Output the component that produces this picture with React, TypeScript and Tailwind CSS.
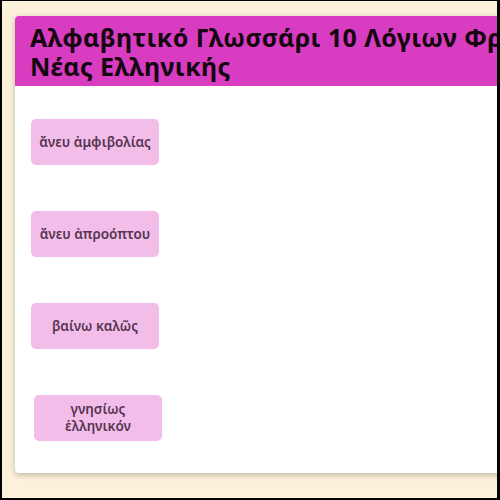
import React from "react";

const items = ["ἄνευ ἀμφιβολίας", "ἄνευ ἀπροόπτου", "βαίνω καλῶς", "γνησίως ἑλληνικόν"];

export default function App() {
  return (
    <div className="w-[500px] h-[500px] overflow-hidden bg-[#fcf2db] border-black border-t border-l-2 border-r-[3px] border-b-2 box-border" style={{ fontFamily: '"Noto Sans", sans-serif' }}>
      <div className="ml-[13px] mt-[15px] w-[520px] h-[457px] bg-white rounded-[4px] shadow-[0_2px_6px_rgba(0,0,0,0.25)] overflow-hidden">
        <div className="bg-[#d83cc0] pl-[15px] pt-[7px] h-[70px]">
          <h1 className="text-[25px] leading-[29px] tracking-[0.4px] font-bold text-[#14060f] whitespace-nowrap">
            Αλφαβητικό Γλωσσάρι 10 Λόγιων Φράσεων
            <br />
            Νέας Ελληνικής
          </h1>
        </div>
        <div className="flex flex-col gap-[46px] pt-[33px] pl-[16px]">
          {items.map((t, i) => (
            <div
              key={t}
              className={`w-[128px] h-[46px] rounded-[5px] bg-[#f3bdea] flex items-center justify-center text-center text-[13.5px] leading-[17px] font-semibold text-[#553550] ${i === 3 ? "ml-[3px]" : "whitespace-nowrap"}`}
            >
              {i === 3 ? (
                <span>
                  γνησίως
                  <br />
                  ἑλληνικόν
                </span>
              ) : (
                t
              )}
            </div>
          ))}
        </div>
      </div>
    </div>
  );
}
